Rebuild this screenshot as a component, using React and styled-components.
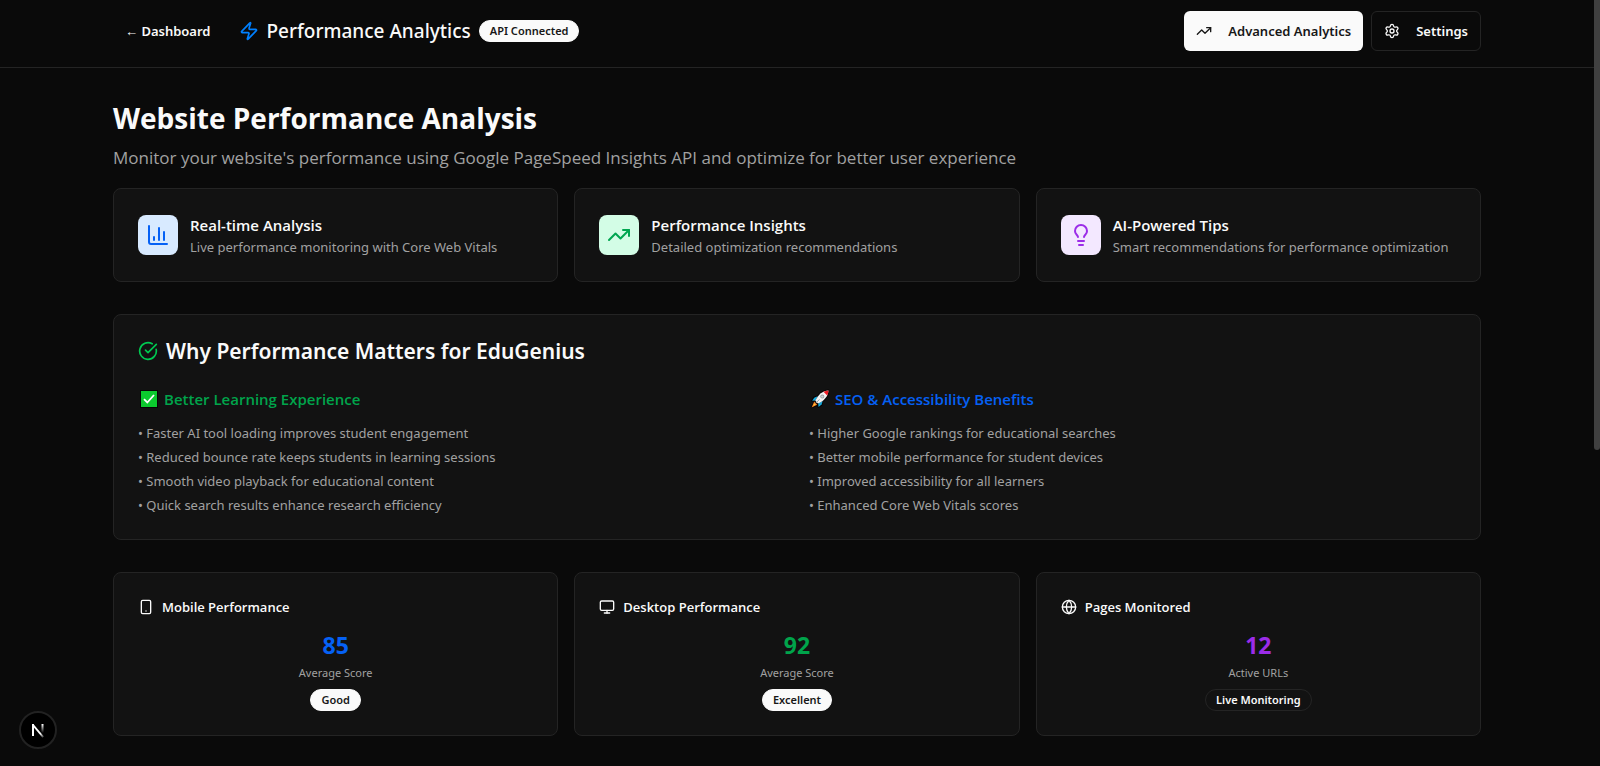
import React from "react";
import styled, { createGlobalStyle, ThemeProvider } from "styled-components";
import {
  Zap,
  TrendingUp,
  Settings,
  ChartColumn,
  Lightbulb,
  CircleCheckBig,
  Smartphone,
  Monitor,
  Globe,
} from "lucide-react";

const theme = {
  bg: "#0a0a0a",
  card: "#121212",
  border: "#242424",
  text: "#fafafa",
  muted: "#a1a1a1",
  dark: "#171717",
  blue: "#0561f5",
  green: "#00a44b",
  purple: "#9b2ce8",
  heading: '"Open Sans", "Noto Sans", sans-serif',
  body: '"Noto Sans", "Open Sans", sans-serif',
};

const GlobalStyle = createGlobalStyle`
  *, *::before, *::after { box-sizing: border-box; }
  body {
    margin: 0;
    padding-right: 6px;
    min-height: 100vh;
    background: #0a0a0a;
  }
  h1, h2, h3, h4, p, ul { margin: 0; padding: 0; }
  svg { flex-shrink: 0; }
`;

const Page = styled.div`
  font-family: ${({ theme }) => theme.body};
  font-size: 13px;
  line-height: 20px;
  color: ${({ theme }) => theme.text};
`;

const Header = styled.header`
  border-bottom: 1px solid ${({ theme }) => theme.border};
`;

const Container = styled.div`
  max-width: 1400px;
  margin: 0 auto;
  padding: 0 16px;
`;

const HeaderBar = styled(Container)`
  display: flex;
  align-items: center;
  justify-content: space-between;
  padding-top: 11px;
  padding-bottom: 16px;
`;

const HeaderGroup = styled.div`
  display: flex;
  align-items: center;
  gap: ${({ $gap }) => $gap}px;
`;

const BackLink = styled.a`
  padding: 0 12px;
  font-weight: 600;
  color: inherit;
  text-decoration: none;
  white-space: nowrap;
`;

const Brand = styled.div`
  display: flex;
  align-items: center;
  gap: 8px;
  svg { color: #0080ff; }
`;

const BrandTitle = styled.h1`
  font-size: 19px;
  font-weight: 500;
  line-height: 28px;
`;

const Badge = styled.span`
  display: inline-flex;
  align-items: center;
  height: 22px;
  padding: 0 10px;
  border: 1px solid ${({ theme, $outline }) => ($outline ? theme.border : theme.text)};
  border-radius: 11px;
  background: ${({ theme, $outline }) => ($outline ? "transparent" : theme.text)};
  color: ${({ theme, $outline }) => ($outline ? theme.text : theme.dark)};
  font-size: 11px;
  font-weight: 600;
  line-height: 16px;
  white-space: nowrap;
`;

const Button = styled.button`
  display: inline-flex;
  align-items: center;
  gap: 16px;
  height: 40px;
  padding: 0 12px;
  border: ${({ theme, $solid }) => ($solid ? "0" : `1px solid ${theme.border}`)};
  border-radius: 6px;
  background: ${({ theme, $solid }) => ($solid ? theme.text : theme.bg)};
  color: ${({ theme, $solid }) => ($solid ? theme.dark : theme.text)};
  font: 600 13px/20px ${({ theme }) => theme.body};
  white-space: nowrap;
  cursor: pointer;
`;

const Main = styled(Container).attrs({ as: "main" })`
  display: flex;
  flex-direction: column;
  gap: 32px;
  padding-top: 32px;
  padding-bottom: 28px;
`;

const Intro = styled.section`
  display: flex;
  flex-direction: column;
`;

const PageTitle = styled.h2`
  font: 700 28px/36px ${({ theme }) => theme.heading};
`;

const Lead = styled.p`
  margin: 8px 0 16px;
  font: 400 17px/28px ${({ theme }) => theme.heading};
  color: ${({ theme }) => theme.muted};
`;

const ThreeColumns = styled.div`
  display: grid;
  grid-template-columns: repeat(3, minmax(0, 1fr));
  gap: 16px;
`;

const Card = styled.article`
  padding: 24px;
  border: 1px solid ${({ theme }) => theme.border};
  border-radius: 8px;
  background: ${({ theme }) => theme.card};
`;

const FeatureCard = styled(Card)`
  display: flex;
  align-items: center;
  gap: 12px;
`;

const IconTile = styled.div`
  display: grid;
  place-items: center;
  flex: none;
  width: 40px;
  height: 40px;
  border-radius: 8px;
  background: ${({ $bg }) => $bg};
  color: ${({ $color }) => $color};
`;

const FeatureTitle = styled.h3`
  font: 600 15px/24px ${({ theme }) => theme.heading};
`;

const Muted = styled.p`
  color: ${({ theme }) => theme.muted};
`;

const WhyTitle = styled.h3`
  display: flex;
  align-items: center;
  gap: 8px;
  margin-bottom: 24px;
  font: 600 21px/24px ${({ theme }) => theme.body};
  svg { color: #00c951; }
`;

const TwoColumns = styled.div`
  display: grid;
  grid-template-columns: repeat(2, minmax(0, 1fr));
  gap: 24px;
`;

const BenefitTitle = styled.h4`
  display: flex;
  align-items: center;
  gap: 4px;
  margin-bottom: 12px;
  font: 600 15px/24px ${({ theme }) => theme.heading};
  color: ${({ $color }) => $color};
`;

const BenefitList = styled.ul`
  display: flex;
  flex-direction: column;
  gap: 4px;
  list-style: none;
  color: ${({ theme }) => theme.muted};
`;

const StatHeader = styled.div`
  display: flex;
  align-items: center;
  gap: 8px;
  margin-bottom: 12px;
`;

const StatTitle = styled.h3`
  font: 600 13px/20px ${({ theme }) => theme.heading};
`;

const StatBody = styled.div`
  display: flex;
  flex-direction: column;
  align-items: center;
`;

const StatValue = styled.div`
  font: 700 23px/32px ${({ theme }) => theme.heading};
  color: ${({ $color }) => $color};
`;

const StatLabel = styled.p`
  margin: 4px 0 8px;
  font-size: 11px;
  line-height: 16px;
  color: ${({ theme }) => theme.muted};
`;

const DevButton = styled.button`
  position: fixed;
  left: 19px;
  bottom: 17px;
  display: grid;
  place-items: center;
  width: 38px;
  height: 38px;
  padding: 0;
  border: 2px solid #222;
  border-radius: 50%;
  background: #000;
  cursor: pointer;
`;

const ScrollThumb = styled.div`
  position: fixed;
  top: 0;
  right: 0;
  width: 6px;
  height: 450px;
  border-radius: 0 0 3px 3px;
  background: #404040;
`;

function CheckMark() {
  return (
    <svg width="22" height="22" viewBox="0 0 22 22" role="img" aria-label="Check">
      <rect x="2" y="2" width="18" height="18" fill="#050505" />
      <rect x="3" y="3" width="16" height="16" fill="#0bca2e" />
      <path d="M6 11.2 9.3 14.5 16 7" fill="none" stroke="#fff" strokeWidth="1.8" />
    </svg>
  );
}

function Rocket() {
  return (
    <svg width="22" height="22" viewBox="0 0 22 22" role="img" aria-label="Rocket">
      <path
        d="M19.6 2.2C14.8 2.4 11 4.6 8.4 8.3L5 9.2 2.8 12.8 5.6 13 2.4 19.6 8.6 17.2 9.2 19.2 12.8 16.8 13.6 13.2C17.4 10.6 19.5 6.9 19.6 2.2Z"
        fill="#050505"
        stroke="#050505"
        strokeWidth="1.4"
        strokeLinejoin="round"
      />
      <path d="M8.6 8.2 5.2 9.7 3.2 12.8 6.5 12.6Z" fill="#16a9dc" />
      <path d="M13.6 13.2 12.6 16.6 9.5 18.9 9.2 15.4Z" fill="#16a9dc" />
      <path d="M5.2 13.6 2.6 19.5 8.2 16.8Z" fill="#f47b20" />
      <path d="M5.4 15.2 4 18.1 6.9 16.7Z" fill="#ffc83d" />
      <path d="M19.5 2.4C13.6 2.8 9.4 6.2 6.3 12.8L9 15.6C15.4 12.5 19.1 8.2 19.5 2.4Z" fill="#f3f3f3" />
      <path d="M19.5 2.4C17.6 2.5 15.9 2.9 14.4 3.7L18.2 7.5C19 6 19.4 4.3 19.5 2.4Z" fill="#ee1c25" />
      <circle cx="13.3" cy="8.6" r="2" fill="#9b9b9b" />
      <circle cx="13.3" cy="8.6" r="1.2" fill="#c9d3d8" />
      <path d="M10.5 11.4 6.8 15.1" stroke="#a0a0a0" strokeWidth="1" />
    </svg>
  );
}

function NextMark() {
  return (
    <svg width="14" height="16" viewBox="0 0 14 16" aria-hidden="true">
      <defs>
        <linearGradient id="stem" x1="0" y1="0" x2="0" y2="1">
          <stop offset="0" stopColor="#fff" />
          <stop offset="1" stopColor="#fff" stopOpacity="0" />
        </linearGradient>
        <linearGradient id="slash" gradientUnits="userSpaceOnUse" x1="2" y1="2" x2="13" y2="15">
          <stop offset="0.7" stopColor="#fff" />
          <stop offset="1" stopColor="#fff" stopOpacity="0.2" />
        </linearGradient>
      </defs>
      <rect x="1" y="2" width="2" height="12" fill="#fff" />
      <path d="M1.7 2.6 12.2 15.2" stroke="url(#slash)" strokeWidth="1.8" fill="none" />
      <rect x="10.5" y="2" width="2" height="9" fill="url(#stem)" />
    </svg>
  );
}

const features = [
  {
    title: "Real-time Analysis",
    text: "Live performance monitoring with Core Web Vitals",
    Icon: ChartColumn,
    bg: "#d8eaff",
    color: "#0561f5",
  },
  {
    title: "Performance Insights",
    text: "Detailed optimization recommendations",
    Icon: TrendingUp,
    bg: "#d3fde6",
    color: "#00a651",
  },
  {
    title: "AI-Powered Tips",
    text: "Smart recommendations for performance optimization",
    Icon: Lightbulb,
    bg: "#f3e8ff",
    color: "#9b2ce8",
  },
];

const benefits = [
  {
    title: "Better Learning Experience",
    color: theme.green,
    Mark: CheckMark,
    items: [
      "Faster AI tool loading improves student engagement",
      "Reduced bounce rate keeps students in learning sessions",
      "Smooth video playback for educational content",
      "Quick search results enhance research efficiency",
    ],
  },
  {
    title: "SEO & Accessibility Benefits",
    color: theme.blue,
    Mark: Rocket,
    items: [
      "Higher Google rankings for educational searches",
      "Better mobile performance for student devices",
      "Improved accessibility for all learners",
      "Enhanced Core Web Vitals scores",
    ],
  },
];

const stats = [
  { title: "Mobile Performance", Icon: Smartphone, value: "85", color: theme.blue, label: "Average Score", badge: "Good" },
  { title: "Desktop Performance", Icon: Monitor, value: "92", color: theme.green, label: "Average Score", badge: "Excellent" },
  { title: "Pages Monitored", Icon: Globe, value: "12", color: theme.purple, label: "Active URLs", badge: "Live Monitoring", outline: true },
];

export default function App() {
  return (
    <ThemeProvider theme={theme}>
      <GlobalStyle />
      <Page>
        <Header>
          <HeaderBar>
            <HeaderGroup $gap={16}>
              <BackLink href="#dashboard">← Dashboard</BackLink>
              <HeaderGroup $gap={8}>
                <Brand>
                  <Zap size={20} />
                  <BrandTitle>Performance Analytics</BrandTitle>
                </Brand>
                <Badge>API Connected</Badge>
              </HeaderGroup>
            </HeaderGroup>
            <HeaderGroup $gap={8}>
              <Button type="button" $solid>
                <TrendingUp size={16} />
                Advanced Analytics
              </Button>
              <Button type="button">
                <Settings size={16} />
                Settings
              </Button>
            </HeaderGroup>
          </HeaderBar>
        </Header>

        <Main>
          <Intro>
            <PageTitle>Website Performance Analysis</PageTitle>
            <Lead>
              Monitor your website's performance using Google PageSpeed Insights API and optimize for better user
              experience
            </Lead>
            <ThreeColumns>
              {features.map(({ title, text, Icon, bg, color }) => (
                <FeatureCard key={title}>
                  <IconTile $bg={bg} $color={color}>
                    <Icon size={24} />
                  </IconTile>
                  <div>
                    <FeatureTitle>{title}</FeatureTitle>
                    <Muted>{text}</Muted>
                  </div>
                </FeatureCard>
              ))}
            </ThreeColumns>
          </Intro>

          <Card>
            <WhyTitle>
              <CircleCheckBig size={20} />
              Why Performance Matters for EduGenius
            </WhyTitle>
            <TwoColumns>
              {benefits.map(({ title, color, Mark, items }) => (
                <div key={title}>
                  <BenefitTitle $color={color}>
                    <Mark />
                    {title}
                  </BenefitTitle>
                  <BenefitList>
                    {items.map((item) => (
                      <li key={item}>• {item}</li>
                    ))}
                  </BenefitList>
                </div>
              ))}
            </TwoColumns>
          </Card>

          <ThreeColumns>
            {stats.map(({ title, Icon, value, color, label, badge, outline }) => (
              <Card key={title}>
                <StatHeader>
                  <Icon size={16} />
                  <StatTitle>{title}</StatTitle>
                </StatHeader>
                <StatBody>
                  <StatValue $color={color}>{value}</StatValue>
                  <StatLabel>{label}</StatLabel>
                  <Badge $outline={outline}>{badge}</Badge>
                </StatBody>
              </Card>
            ))}
          </ThreeColumns>
        </Main>
      </Page>
      <DevButton type="button" aria-label="Open developer tools">
        <NextMark />
      </DevButton>
      <ScrollThumb />
    </ThemeProvider>
  );
}
